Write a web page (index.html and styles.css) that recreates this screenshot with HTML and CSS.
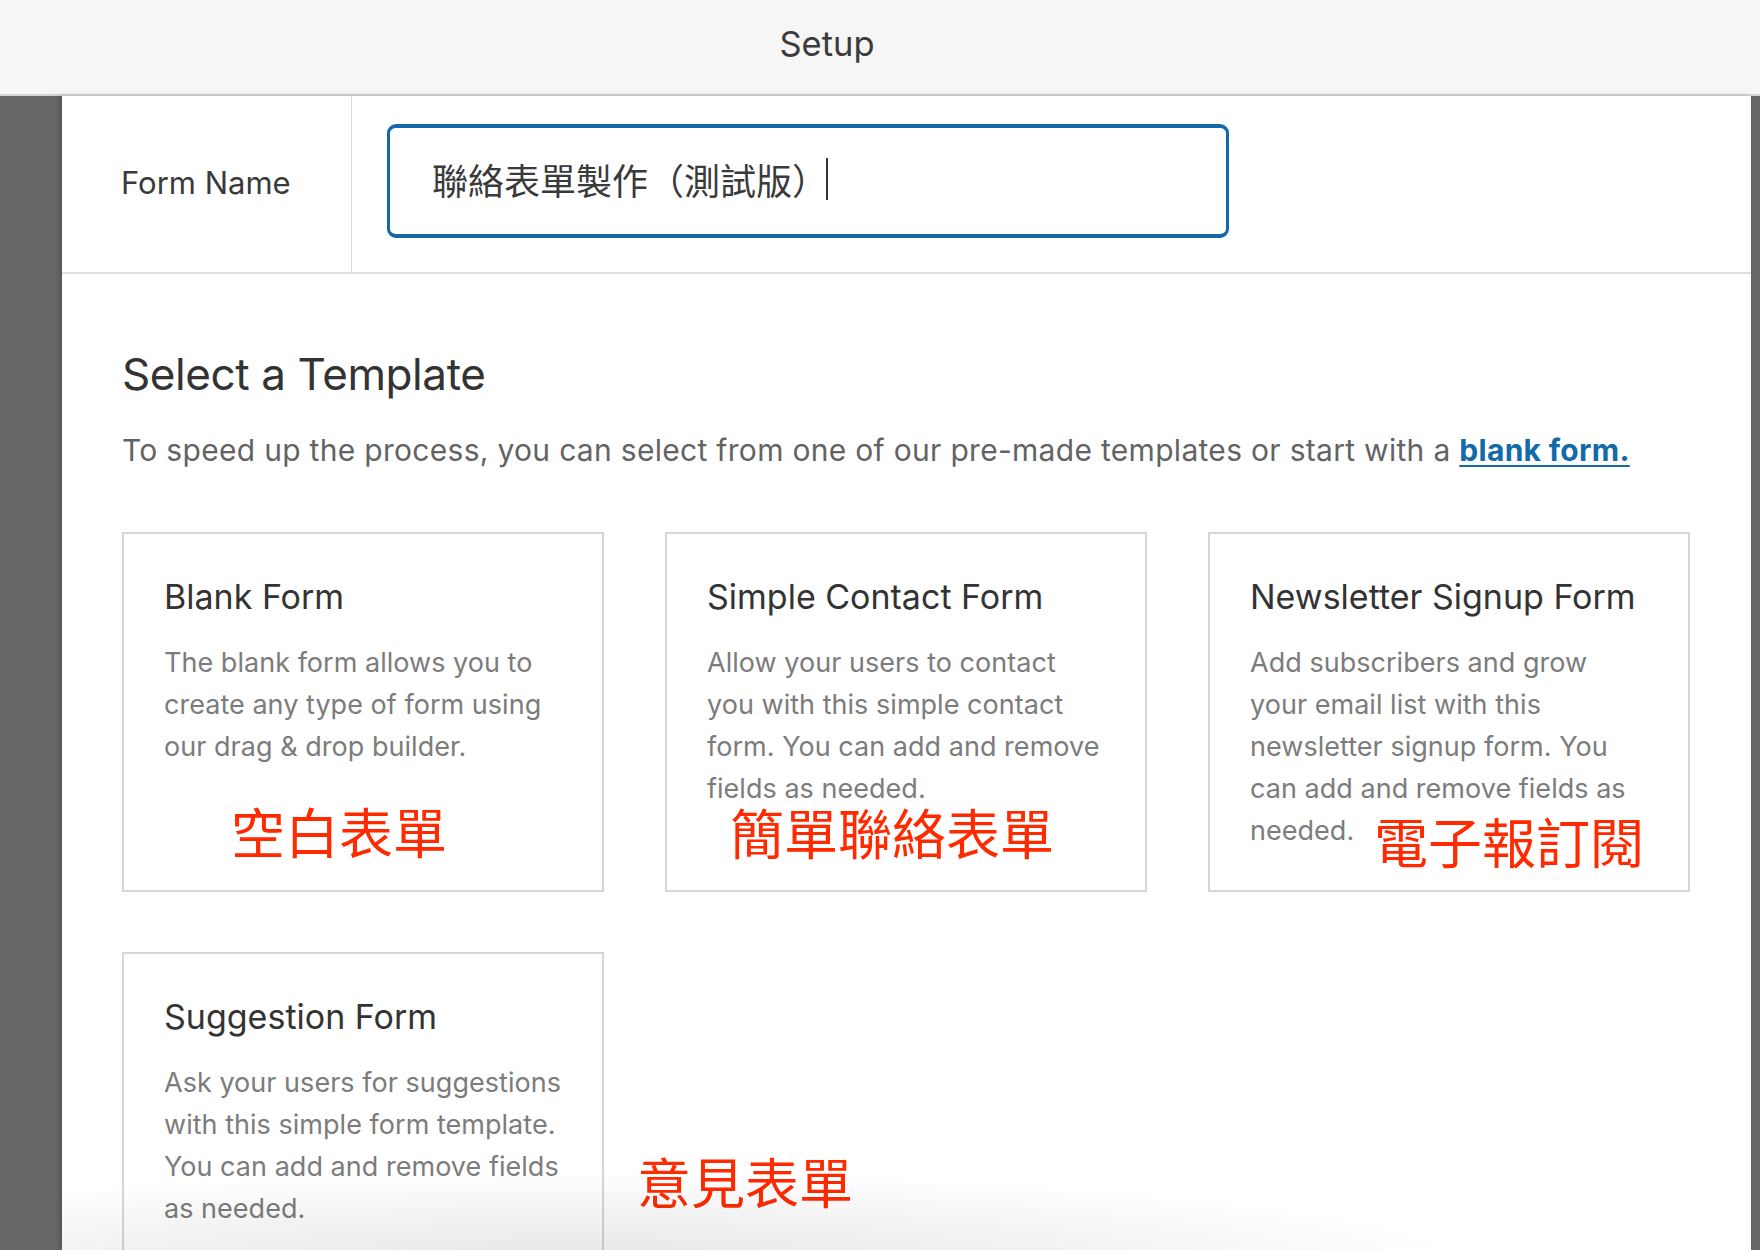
FILE: index.html
```html
<!DOCTYPE html>
<html lang="zh-Hant">
<head>
<meta charset="utf-8">
<title>Setup</title>
<link rel="stylesheet" href="styles.css">
</head>
<body>
<header class="topbar">
  <h1 class="topbar-title">Setup</h1>
</header>
<main class="panel">
  <div class="name-row">
    <div class="name-label">Form Name</div>
    <div class="name-field">
      <div class="fake-input"><span class="fake-input-text">聯絡表單製作（測試版）</span><span class="caret"></span></div>
    </div>
  </div>
  <section class="templates">
    <h2 class="templates-title">Select a Template</h2>
    <p class="templates-desc">To speed up the process, you can select from one of our pre-made templates or start with a <a class="blank-link" href="#">blank form.</a></p>
    <div class="template-grid">
      <div class="card">
        <h3 class="card-title">Blank Form</h3>
        <p class="card-desc">The blank form allows you to create any type of form using our drag &amp; drop builder.</p>
        <span class="note note-blank">空白表單</span>
      </div>
      <div class="card">
        <h3 class="card-title">Simple Contact Form</h3>
        <p class="card-desc">Allow your users to contact you with this simple contact form. You can add and remove fields as needed.</p>
        <span class="note note-contact">簡單聯絡表單</span>
      </div>
      <div class="card">
        <h3 class="card-title">Newsletter Signup Form</h3>
        <p class="card-desc">Add subscribers and grow your email list with this newsletter signup form. You can add and remove fields as needed.</p>
        <span class="note note-news">電子報訂閱</span>
      </div>
      <div class="card">
        <h3 class="card-title">Suggestion Form</h3>
        <p class="card-desc">Ask your users for suggestions with this simple form template. You can add and remove fields as needed.</p>
        <span class="note note-suggest">意見表單</span>
      </div>
    </div>
  </section>
  <div class="bottom-fade"></div>
</main>
</body>
</html>
```

FILE: styles.css
```css
* { box-sizing: border-box; }

html, body {
  margin: 0;
  padding: 0;
}

body {
  width: 1760px;
  height: 1250px;
  overflow: hidden;
  background: #676767;
  font-family: Inter, "Noto Sans", "Noto Sans CJK TC", sans-serif;
  color: #3a3a3a;
}

.topbar {
  height: 96px;
  background: #f6f6f6;
  border-bottom: 2px solid #d4d4d4;
  display: flex;
  align-items: center;
  justify-content: center;
  padding-right: 106px;
  padding-bottom: 7px;
}

.topbar-title {
  margin: 0;
  font-size: 34.5px;
  font-weight: 400;
  color: #3b3b3b;
}

.panel {
  position: relative;
  margin: 0 9px 0 62px;
  height: 1154px;
  background: #ffffff;
  box-shadow: -3px 0 5px rgba(0, 0, 0, 0.18);
}

.name-row {
  display: flex;
  height: 178px;
  border-bottom: 2px solid #dedede;
}

.name-label {
  width: 290px;
  flex: none;
  border-right: 1px solid #dcdcdc;
  display: flex;
  align-items: center;
  padding-left: 59px;
  padding-bottom: 4px;
  font-size: 31px;
  color: #3a3a3a;
}

.name-field {
  flex: 1;
  padding: 28px 0 0 35px;
}

.fake-input {
  width: 842px;
  height: 114px;
  border-style: solid;
  border-color: #1467a9;
  border-width: 4px 3px;
  border-radius: 9px;
  display: flex;
  align-items: center;
  padding-left: 42px;
  padding-bottom: 5px;
}

.fake-input-text {
  font-family: "Noto Sans CJK TC", sans-serif;
  font-size: 36px;
  color: #3a3a3a;
  line-height: 1;
}

.caret {
  display: inline-block;
  width: 2px;
  height: 42px;
  background: #333;
  margin-left: -2px;
}

.templates {
  padding: 0 60px;
}

.templates-title {
  margin: 0;
  padding-top: 73px;
  font-size: 44px;
  font-weight: 400;
  line-height: 54px;
  color: #333;
  letter-spacing: -0.4px;
}

.templates-desc {
  margin: 28px 0 0;
  font-size: 30px;
  line-height: 42px;
  color: #636363;
  letter-spacing: 0.3px;
}

.blank-link {
  color: #136aa8;
  font-weight: 700;
  text-decoration: underline;
  text-decoration-thickness: 2px;
  text-underline-offset: 4px;
}

.template-grid {
  margin-top: 61px;
  display: grid;
  grid-template-columns: repeat(3, 482px);
  column-gap: 61px;
  row-gap: 60px;
}

.card {
  position: relative;
  border: 2px solid #d6d6d6;
  padding: 42px 39px 38px 40px;
}

.card-title {
  margin: 0;
  font-size: 34px;
  font-weight: 400;
  line-height: 42px;
  color: #333;
}

.card-desc {
  margin: 24px 0 0;
  font-size: 27px;
  line-height: 42px;
  color: #7c7c7c;
  letter-spacing: 0.03px;
}

.note {
  position: absolute;
  font-family: "Noto Sans CJK TC", sans-serif;
  font-size: 54px;
  line-height: 1;
  color: #ff2a00;
  white-space: nowrap;
}

.note-blank { left: 107px; top: 270px; }
.note-contact { left: 63px; top: 271px; }
.note-news { left: 164px; top: 280px; }
.note-suggest { left: 513px; top: 200px; }

.bottom-fade {
  position: absolute;
  left: 0;
  bottom: 0;
  width: 1500px;
  height: 110px;
  pointer-events: none;
  background: radial-gradient(ellipse 900px 95px at 520px 115%, rgba(0, 0, 0, 0.1), rgba(0, 0, 0, 0.05) 55%, rgba(0, 0, 0, 0) 100%);
}
```
